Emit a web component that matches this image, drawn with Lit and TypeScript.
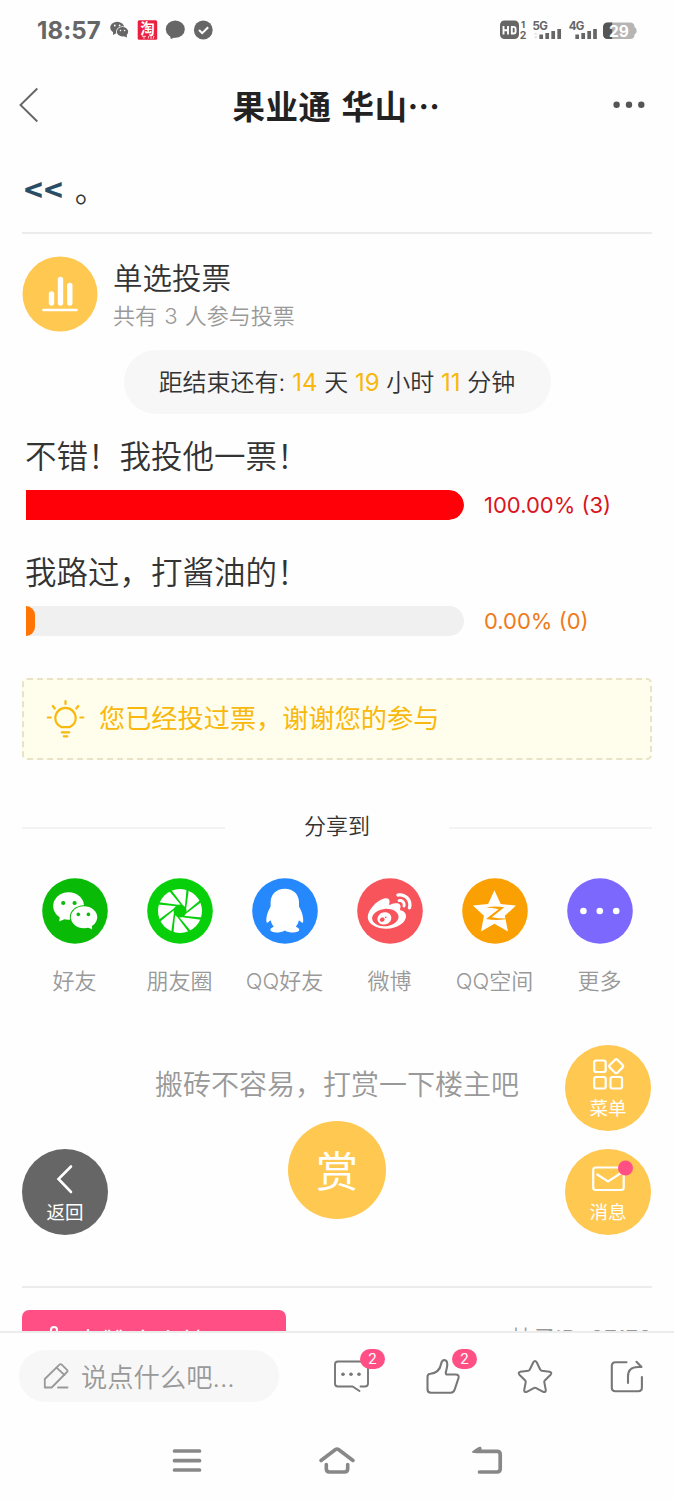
import { LitElement, html, css, svg } from "lit";
import { customElement } from "lit/decorators.js";

const WEIBO =
  "M10.098 20.323c-3.977.391-7.414-1.406-7.672-4.02-.259-2.609 2.759-5.047 6.74-5.441 3.979-.394 7.413 1.404 7.671 4.018.259 2.6-2.759 5.049-6.737 5.439l-.002.004zM9.05 17.219c-.384.616-1.208.884-1.829.602-.612-.279-.793-.991-.406-1.593.379-.595 1.176-.861 1.793-.601.622.263.82.972.442 1.592zm1.27-1.627c-.141.237-.449.353-.689.253-.236-.09-.313-.361-.177-.586.138-.227.436-.346.672-.24.239.09.315.36.18.601l.014-.028zm.176-2.719c-1.893-.493-4.033.45-4.857 2.118-.836 1.704-.026 3.591 1.886 4.21 1.983.64 4.318-.341 5.132-2.179.8-1.793-.201-3.642-2.161-4.149zm7.563-1.224c-.346-.105-.57-.18-.405-.615.375-.977.42-1.804 0-2.404-.781-1.112-2.915-1.053-5.364-.03 0 0-.766.331-.571-.271.376-1.217.315-2.224-.27-2.809-1.338-1.337-4.869.045-7.888 3.08C1.309 10.87 0 13.273 0 15.348c0 3.981 5.099 6.395 10.086 6.395 6.536 0 10.888-3.801 10.888-6.82 0-1.822-1.547-2.854-2.915-3.284v.01zm1.908-5.092c-.766-.856-1.908-1.187-2.96-.962-.436.09-.706.511-.616.932.09.42.511.691.932.602.511-.105 1.067.044 1.442.465.376.421.466.977.316 1.473-.136.406.089.856.51.992.405.119.857-.105.992-.512.33-1.021.12-2.178-.646-3.035l.03.045zm2.418-2.195c-1.576-1.757-3.905-2.419-6.054-1.968-.496.104-.812.587-.706 1.081.104.496.586.813 1.082.707 1.532-.331 3.185.15 4.296 1.383 1.112 1.246 1.429 2.943.947 4.416-.165.48.106 1.007.586 1.157.479.165.991-.104 1.157-.586.675-2.088.241-4.478-1.338-6.235l.03.045z";

const shares = [
  {
    label: "好友",
    color: "#09bb07",
    icon: svg`
      <ellipse cx="26.6" cy="28" rx="15.4" ry="13.8" fill="#fff"/>
      <path d="M18 36 17.3 43.4 25 40z" fill="#fff"/>
      <ellipse cx="42" cy="39.3" rx="14.2" ry="12" fill="#09bb07"/>
      <ellipse cx="42" cy="39.3" rx="13.2" ry="11" fill="#fff"/>
      <path d="M44 48.5 50.2 51.6 49.5 45z" fill="#fff"/>
      <g fill="#09bb07"><circle cx="21.2" cy="25" r="2.1"/><circle cx="32.6" cy="25" r="2.1"/>
      <circle cx="36.3" cy="36.4" r="1.8"/><circle cx="46.4" cy="36.4" r="1.8"/></g>`,
  },
  {
    label: "朋友圈",
    color: "#07d00b",
    icon: svg`
      <circle cx="33" cy="33" r="22" fill="#fff"/>
      <circle cx="33" cy="33" r="6.500" fill="#07d00b"/>
      ${[0, 45, 90, 135, 180, 225, 270, 315].map(
        (a) => svg`<path transform="rotate(${a} 33 33)" d="M37.800 30 39.600 10.500 42 10.500 38.900 32.500z" fill="#07d00b"/>`
      )}`,
  },
  {
    label: "QQ好友",
    color: "#2588fd",
    icon: svg`<path fill="#fff" d="M32.800 10.800C24.400 10.800 18.600 16.500 18.600 24.500V28.400C16.500 32 13.800 38.500 14.400 43.500C14.700 45.500 16.200 44.800 17.400 43L18.800 42.500C19.200 44.700 20.200 46.900 21.800 48.800C19.500 49.700 18.100 50.900 18.300 52.100C18.700 55.300 28.500 55.300 32.800 52.500C37.100 55.300 46.900 55.300 47.300 52.100C47.500 50.900 46.100 49.700 43.800 48.800C45.400 46.900 46.400 44.700 46.800 42.500L48.200 43C49.400 44.800 50.900 45.500 51.200 43.500C51.800 38.500 49.100 32 47 28.400V24.500C47 16.500 41.200 10.800 32.800 10.800z"/>`,
  },
  {
    label: "微博",
    color: "#f8545c",
    icon: svg`<path transform="translate(10.700 11) scale(1.830)" d=${WEIBO} fill="#fff"/>`,
  },
  {
    label: "QQ空间",
    color: "#fba003",
    icon: svg`
      <path d="M32.400 12.300 38.700 26 54 27.600 42.800 37.800 46 53.400 32.400 45.800 19 53.400 21.900 37.800 10.900 27.600 26.100 26z" fill="#fff"/>
      <path d="M24.400 29.300C31 28 37 28.300 42.300 29.300L29.800 39.200C36 40.500 42 40.800 48 40.300C41 42.300 32 42.300 24 41L36.500 31.200C32 30.200 28 29.900 24.400 29.300z" fill="#fba003"/>`,
  },
  {
    label: "更多",
    color: "#7c68fd",
    icon: svg`<g fill="#fff"><circle cx="16.400" cy="33" r="3.300"/><circle cx="32.800" cy="33" r="3.300"/><circle cx="49.200" cy="33" r="3.300"/></g>`,
  },
];

const options = [
  { label: "不错！我投他一票！", percent: 100, text: "100.00% (3)", bar: "#ff0008", color: "#d9151f" },
  { label: "我路过，打酱油的！", percent: 2.1, text: "0.00% (0)", bar: "#ff7403", color: "#ee7a1a" },
];

@customElement("app-root")
export class AppRoot extends LitElement {
  static styles = css`
    :host {
      display: flex;
      flex-direction: column;
      position: relative;
      width: 674px;
      height: 1500px;
      overflow: hidden;
      background: #fefefe;
      color: #333;
      font-family: Inter, "Noto Sans CJK SC", sans-serif;
      font-weight: 350;
    }
    * { box-sizing: border-box; }
    svg { display: block; flex: none; overflow: visible; }
    .status { display: flex; align-items: center; justify-content: space-between; height: 60px; padding: 0 37px; flex: none; }
    .side { display: flex; align-items: center; }
    .clock { font: 700 24px/30px Inter, sans-serif; color: #666; width: 73px; letter-spacing: 0.1px; padding-top: 1px; }
    .st { font-family: Inter, sans-serif; font-weight: 700; }
    .tao { font-family: "Noto Sans CJK SC", sans-serif; font-weight: 700; }
    .header { display: flex; align-items: center; justify-content: space-between; height: 90px; padding: 0 29px 0 19px; flex: none; }
    .title { font-family: "Noto Sans CJK SC", sans-serif; font-weight: 700; font-size: 32.500px; line-height: 48px; color: #222; white-space: pre; letter-spacing: 0.500px; word-spacing: 2px; margin: 0 0 0 21px; }
    .content { height: 1181px; padding: 0 22px; overflow: hidden; flex: none; display: flex; flex-direction: column; }
    .article { height: 84px; flex: none; border-bottom: 2px solid #ececec; padding: 16px 0 0 2px; font-size: 31.500px; line-height: 44px; white-space: pre; word-spacing: 2px; }
    .more { color: #2a4d66; font-family: "Noto Sans CJK SC", sans-serif; font-weight: 700; font-size: 32px; letter-spacing: 1px; }
    .vote { display: flex; gap: 15px; align-items: center; height: 75px; margin-top: 22px; flex: none; }
    .votetext { display: flex; flex-direction: column; }
    .kind { font-size: 29.500px; line-height: 40px; padding-top: 5px; }
    .count { font-size: 22px; line-height: 36px; color: #999; white-space: pre; word-spacing: 1px; }
    .pill { margin: 19px auto 0; width: 427px; height: 64px; border-radius: 32px; background: #f7f7f7; display: flex; justify-content: center; align-items: center; font-size: 24px; line-height: 36px; white-space: pre; flex: none; padding-top: 2px; }
    .gold { color: #f8b80d; font-size: 24px; font-weight: 400; }
    .option { margin-top: 19px; padding-left: 4px; flex: none; }
    .option + .option { margin-top: 29px; }
    .optlabel { font-size: 31.500px; line-height: 44px; height: 44px; margin-left: -1px; padding-top: 2px; }
    .barrow { display: flex; align-items: center; gap: 20px; margin-top: 13px; height: 30px; }
    .track { width: 438px; height: 30px; background: #f0f0f0; border-radius: 0 15px 15px 0; overflow: hidden; }
    .fill { height: 30px; border-radius: 0 15px 15px 0; }
    .pct { font-size: 22px; line-height: 30px; font-weight: 400; }
    .notice { margin-top: 42px; height: 82px; width: 630px; flex: none; display: flex; align-items: center; gap: 14px; padding-left: 23px; background: #fffeec; border: 2px dashed #e8e2c6; border-radius: 5px; color: #f8b80d; font-size: 26.200px; line-height: 36px; font-weight: 400; }
    .sharehead { margin-top: 52px; height: 32px; display: flex; align-items: center; justify-content: space-between; font-size: 22px; flex: none; }
    .rule { width: 203px; height: 2px; background: #f3f3f3; }
    .sharehead span { line-height: 32px; margin-top: -5px; }
    .shares { margin-top: 34px; display: grid; grid-template-columns: repeat(6, 1fr); width: 630px; flex: none; }
    .share { display: flex; flex-direction: column; align-items: center; gap: 21px; font-size: 22px; line-height: 32px; height: 118px; color: #999; white-space: nowrap; }
    .reward { margin-top: 68px; display: flex; flex-direction: column; align-items: center; gap: 19px; font-size: 28px; line-height: 38px; color: #999; flex: none; }
    .reward span { padding-top: 2px; height: 38px; }
    .shang { width: 98px; height: 98px; border-radius: 50%; background: #ffc850; color: #fff; font-size: 42px; font-weight: 400; line-height: 101px; text-align: center; }
    .foot { margin-top: 67px; border-top: 2px solid #ececec; padding-top: 22px; display: flex; justify-content: space-between; flex: none; height: 90px; }
    .like { width: 264px; height: 58px; background: #ff4f85; color: #fff; border-radius: 7px 7px 0 0; display: flex; gap: 10px; padding: 15px 0 0 21px; font-size: 26.400px; line-height: 34px; font-weight: 400; }
    .pid { color: #999; font-size: 22.500px; line-height: 34px; padding-top: 12px; white-space: pre; }
    .bar { border-top: 2px solid #ececec; height: 89px; display: flex; align-items: center; padding: 0 29px 0 19px; justify-content: space-between; flex: none; }
    .input { width: 260px; height: 52px; border-radius: 26px; background: #f7f7f7; display: flex; align-items: center; gap: 12px; padding-left: 24px; color: #999; font-size: 26.300px; line-height: 36px; margin-top: -2px; }
    .input span { padding-top: 4px; }
    .acts { display: flex; gap: 56px; }
    .act { position: relative; width: 36px; height: 36px; }
    .badge { position: absolute; left: 27px; top: -10px; width: 25px; height: 20px; border-radius: 10px; background: #ff4f85; color: #fff; font: 400 15px/20px Roboto, sans-serif; text-align: center; }
    .nav { height: 80px; display: flex; justify-content: center; gap: 117px; align-items: center; flex: none; padding: 2px 0 0 1px; }
    .float { position: absolute; width: 86px; height: 86px; border-radius: 50%; background: #ffc850; color: #fff; display: flex; flex-direction: column; align-items: center; font-size: 18.500px; line-height: 26px; font-weight: 400; padding-top: 11px; gap: 1px; }
    .back { left: 22px; top: 1149px; background: #666; }
    .menu { left: 565px; top: 1045px; }
    .msg { left: 565px; top: 1149px; }
  `;

  render() {
    return html`
      <div class="status">
        <div class="side">
          <span class="clock">18:57</span>
          <svg width="104" height="24" viewBox="110 18 104 24">
            <ellipse cx="117.200" cy="27.500" rx="7" ry="5.800" fill="#666"/>
            <path d="M113 31v4l4.500-2.500z" fill="#666"/>
            <ellipse cx="122.500" cy="31.800" rx="6.500" ry="5.500" fill="#fefefe"/>
            <ellipse cx="122.500" cy="31.800" rx="5.700" ry="4.700" fill="#666"/>
            <path d="M123 36l4 1.500-.5-4z" fill="#666"/>
            <g fill="#fefefe"><circle cx="114.800" cy="25.500" r=".9"/><circle cx="119.600" cy="25.500" r=".9"/><circle cx="120.500" cy="30.500" r=".8"/><circle cx="124.600" cy="30.500" r=".8"/></g>
            <rect x="137.700" y="20.300" width="19.500" height="19.500" rx="1.500" fill="#e9203f"/>
            <text class="tao" x="147.400" y="34" font-size="14.500" fill="#fff" text-anchor="middle">淘</text>
            <path d="M142 36.300h4M144 36.300v2.500M148 38.500l1-2.500M151 36v3M154 36l-1 2.800" stroke="#ffd5d9" stroke-width="1" fill="none"/>
            <ellipse cx="175.300" cy="29.200" rx="9.500" ry="8.600" fill="#666"/>
            <path d="M170 36l.8 3 5-2z" fill="#666"/>
            <circle cx="203.300" cy="30" r="9.400" fill="#666"/>
            <path d="M199 30l3.200 3.200 6-6" fill="none" stroke="#fefefe" stroke-width="2"/>
          </svg>
        </div>
        <svg width="138" height="24" viewBox="499 18 138 24">
          <rect x="500" y="20.500" width="19" height="18.500" rx="4.500" fill="#666"/>
          <path d="M503.500 26v8.500M503.500 30.200h4.500M508 26v8.500M511.800 26.900h1.800q2 0 2 2v2.600q0 2-2 2h-1.800z" fill="none" stroke="#fefefe" stroke-width="1.900"/>
          <g class="st" fill="#666">
            <text x="521" y="28" font-size="9.500">1</text><text x="519.700" y="39" font-size="10.500">2</text>
            <text x="532.500" y="29.800" font-size="11.500" textLength="15.500">5G</text><text x="568.800" y="29.800" font-size="11.500" textLength="15.500">4G</text>
          </g>
          <path d="M533.800 34.500l2-2 2 2zM533.800 36.500l2 2 2-2z" fill="#ddd"/>
          <g stroke="#666" stroke-width="3.700">
            <path d="M541.200 34.500v4.500M547.200 33v6M553.200 31v8M559.200 29v10M577.200 34.500v4.500M583.200 33v6M589.200 31v8M595 29v10"/>
          </g>
          <path d="M608 22.500h22q4.500 0 4.500 4.500 2.200 1.200 2.200 3.800t-2.200 3.700q0 4.500-4.500 4.500h-22q-5 0-5-5V27.500q0-5 5-5z" fill="#b5b5b5"/>
          <path d="M612.200 22.500H608q-5 0-5 5V34q0 5 5 5h4.200z" fill="#555"/>
          <text class="st" x="618.800" y="36.700" font-size="15.500" fill="#fff" text-anchor="middle">29</text>
        </svg>
      </div>

      <div class="header">
        <svg width="20" height="36" viewBox="0 0 20 36"><path d="M18.300 1.500 1.500 18l16.800 16.500" fill="none" stroke="#666" stroke-width="1.900"/></svg>
        <span class="title">果业通 华山⋯</span>
        <svg width="32" height="8" viewBox="0 0 32 8"><g fill="#555"><circle cx="3.600" cy="3.800" r="3.200"/><circle cx="16" cy="3.800" r="3.200"/><circle cx="28.300" cy="3.800" r="3.200"/></g></svg>
      </div>

      <div class="content">
        <div class="article"><span class="more">&lt;&lt;</span> 。</div>
        <div class="vote">
          <svg width="76" height="76" viewBox="0 0 76 76">
            <circle cx="38" cy="38" r="37.500" fill="#ffc850"/>
            <g stroke="#fff" stroke-linecap="round" fill="none"><path d="M29.500 38v9M38.500 23.500V47M47.800 29.500V47" stroke-width="5.400"/><path d="M21.500 54h33" stroke-width="2.600"/></g>
          </svg>
          <div class="votetext"><span class="kind">单选投票</span><span class="count">共有 3 人参与投票</span></div>
        </div>
        <div class="pill"><span>距结束还有: <span class="gold">14</span> 天 <span class="gold">19</span> 小时 <span class="gold">11</span> 分钟</span></div>
        ${options.map(
          (o) => html`<div class="option">
            <div class="optlabel">${o.label}</div>
            <div class="barrow">
              <div class="track"><div class="fill" style="width:${o.percent}%;background:${o.bar}"></div></div>
              <span class="pct" style="color:${o.color}">${o.text}</span>
            </div>
          </div>`
        )}
        <div class="notice">
          <svg width="38" height="40" viewBox="0.700 0.500 38 40">
            <g fill="none" stroke="#f8b80d" stroke-width="2.200" stroke-linecap="round">
              <path d="M15 28.600Q9 25.800 9 19.600a10.200 10.200 0 0 1 20.400 0Q29.400 25.800 23.400 28.600z"/>
              <path d="M19.200 2.500v3M6.500 7.500l2 2.500M32 7.500l-2 2.500M1.500 19h3M34 19h3M15.500 33.800h7.500M17.500 37.800h3.500"/>
            </g>
          </svg>
          <span>您已经投过票，谢谢您的参与</span>
        </div>
        <div class="sharehead"><div class="rule"></div><span>分享到</span><div class="rule"></div></div>
        <div class="shares">
          ${shares.map(
            (s) => html`<div class="share">
              <svg width="66" height="66" viewBox="0 0 66 66"><circle cx="33" cy="33" r="32.800" fill=${s.color}/>${s.icon}</svg>
              <span>${s.label}</span>
            </div>`
          )}
        </div>
        <div class="reward"><span>搬砖不容易，打赏一下楼主吧</span><div class="shang">赏</div></div>
        <div class="foot">
          <div class="like">
            <svg width="22" height="30" viewBox="0 0 22 30"><path d="M2 13h4l2-5V5q0-3 3-3t3 3l-1 6h7l-2 14H2z" fill="none" stroke="#fff" stroke-width="2"/></svg>
            <span>点赞这个帖子</span>
          </div>
          <span class="pid">帖子ID: 27172</span>
        </div>
      </div>

      <div class="bar">
        <div class="input">
          <svg width="26" height="28" viewBox="43 1362 26 28"><g fill="none" stroke="#999" stroke-width="1.800" stroke-linejoin="round" stroke-linecap="round"><path d="M44.800 1387.500V1379L59.500 1364.600Q60.600 1363.600 61.700 1364.600L67 1369.800Q68.100 1371 67 1372L51.700 1387.500z"/><path d="M56.500 1367.700 64.500 1375M58 1387.500H67.500"/></g></svg>
          <span>说点什么吧...</span>
        </div>
        <div class="acts">
          <div class="act">
            <svg width="36" height="36" viewBox="334 1358 36 36"><path d="M361.500 1385.500H366q3 0 3-3V1363.500q0-3-3-3H339q-3 0-3 3v19q0 3 3 3h14.500l7 4.500" fill="none" stroke="#777" stroke-width="1.900" stroke-linecap="round"/><g fill="#777"><circle cx="344" cy="1373.300" r="1.800"/><circle cx="352" cy="1373.300" r="1.800"/><circle cx="360" cy="1373.300" r="1.800"/></g></svg>
            <span class="badge">2</span>
          </div>
          <div class="act">
            <svg width="36" height="36" viewBox="426 1358 36 36"><path d="M428.500 1376q0-3 3-3.200 9-1.200 10.500-9.500.8-4 3-4.300c3.500 0 3.800 4 2.800 8l-1 4.500q-.3 2 1.500 2h8.200q4 0 3 3.500l-3.800 11.500q-1 3.200-4 3.200H432q-3.500 0-3.500-3.500z" fill="none" stroke="#777" stroke-width="2.100" stroke-linejoin="round"/></svg>
            <span class="badge">2</span>
          </div>
          <div class="act">
            <svg width="36" height="36" viewBox="517.500 1358 36 36"><path d="M533.800 1361.300q1.700-2.600 3.400 0l3.600 7.400q.4.900 1.300 1l8 1q2.800.8 1 3l-5.800 5.800q-.7.700-.5 1.700l1.500 7.800q0 2.800-2.600 1.800l-7-3.700q-1.200-.6-2.400 0l-7 3.700q-2.600 1-2.600-1.800l1.500-7.800q.2-1-.5-1.700l-5.800-5.800q-1.800-2.200 1-3l8-1q.9-.1 1.300-1z" fill="none" stroke="#777" stroke-width="2" stroke-linejoin="round"/></svg>
          </div>
          <div class="act">
            <svg width="36" height="36" viewBox="609.500 1358 36 36"><path d="M627 1361.200H616q-3.700 0-3.700 3.700v21.700q0 3.700 3.700 3.700h22.700q3.700 0 3.700-3.700V1376M628.500 1382v-6.500q0-9.500 10-9.500h3.500L637 1360.800" fill="none" stroke="#777" stroke-width="2.100" stroke-linecap="round" stroke-linejoin="round"/></svg>
          </div>
        </div>
      </div>
      <div class="nav">
        <svg width="30" height="26" viewBox="172 1448 30 26"><path d="M174.500 1451h25M174.500 1460.700h25M174.500 1470h25" stroke="#888" stroke-width="3.700" stroke-linecap="round"/></svg>
        <svg width="36" height="28" viewBox="319 1445 36 28"><path d="M321 1458.500 335.500 1447.500Q337 1446.500 338.500 1447.500L353 1458.500M326.300 1462.500v4.300q0 3.200 3.200 3.200h15q3.200 0 3.200-3.200v-4.300" fill="none" stroke="#888" stroke-width="3.600" stroke-linecap="round"/></svg>
        <svg width="31" height="28" viewBox="472 1445 31 28"><path d="M476 1449.300h21q3.200 0 3.200 3.200v14.300q0 3.200-3.200 3.200H479.500" fill="none" stroke="#888" stroke-width="3.700" stroke-linecap="round"/><path d="M472 1450q0-1.200 6.800-5 2.700-.8 2.700 1.200v4.800h-7.500q-2 0-2-1z" fill="#888"/></svg>
      </div>

      <div class="float back">
        <svg width="40" height="38" viewBox="45 1160 40 38"><path d="M71 1166.500 58.500 1179 71 1192" fill="none" stroke="#fff" stroke-width="2.600" stroke-linecap="round"/></svg>
        <span>返回</span>
      </div>
      <div class="float menu">
        <svg width="40" height="38" viewBox="588 1056 40 38"><g fill="none" stroke="#fff" stroke-width="2.200"><rect x="594.200" y="1060.500" width="11.500" height="11.500" rx="2"/><rect x="594.200" y="1077" width="11.500" height="11.500" rx="2"/><rect x="610.500" y="1077" width="11.500" height="11.500" rx="2"/><rect x="610.800" y="1060.800" width="10.800" height="10.800" rx="2" transform="rotate(45 616.200 1066.200)"/></g></svg>
        <span>菜单</span>
      </div>
      <div class="float msg">
        <svg width="40" height="38" viewBox="588 1160 40 38"><rect x="593.200" y="1167.500" width="30.500" height="22.500" rx="2.500" fill="none" stroke="#fff" stroke-width="2.200"/><path d="M596.500 1174l11.500 7.500 13-8.500" fill="none" stroke="#fff" stroke-width="2.200"/><circle cx="625.500" cy="1168" r="7.500" fill="#ff4f85"/></svg>
        <span>消息</span>
      </div>
    `;
  }
}
